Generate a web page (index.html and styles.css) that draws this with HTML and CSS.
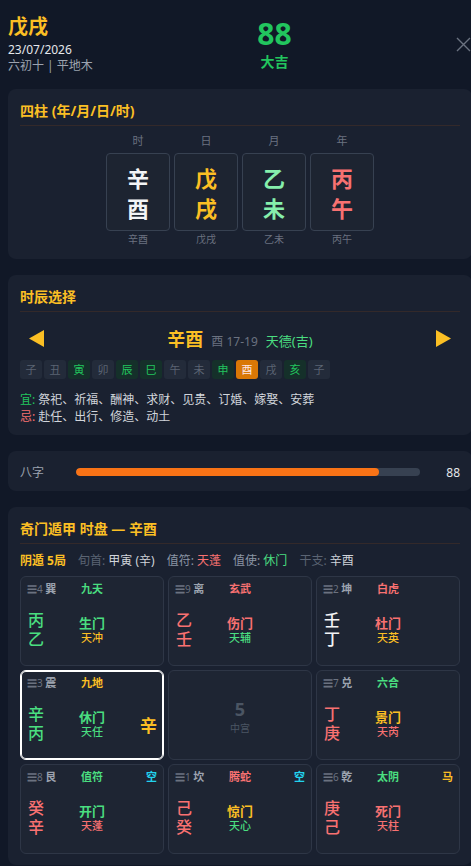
FILE: index.html
```html
<!DOCTYPE html>
<html lang="zh">
<head>
    <meta charset="UTF-8">
    <title>戊戌 23/07/2026</title>
    <link rel="stylesheet" href="styles.css">
</head>
<body>
<div class="page">
    <!-- Day header -->
    <header class="top">
        <div class="day">
            <div class="day-gz">戊戌</div>
            <div class="day-date">23/07/2026</div>
            <div class="day-lunar">六初十 | 平地木</div>
        </div>
        <div class="score">
            <div class="score-num">88</div>
            <div class="score-label">大吉</div>
        </div>
        <button class="close" aria-label="close">
            <svg width="15" height="15" viewBox="0 0 15 15"><path d="M1 1L14 14M14 1L1 14" stroke="#6b7280" stroke-width="1.4" fill="none"/></svg>
        </button>
    </header>

    <!-- Four pillars -->
    <section class="card card-pillars">
        <h2 class="card-title">四柱 (年/月/日/时)</h2>
        <div class="pillars">
            <div class="pillar">
                <div class="pillar-label">时</div>
                <div class="pillar-box c-white"><span>辛</span><span>酉</span></div>
                <div class="pillar-sub">辛酉</div>
            </div>
            <div class="pillar">
                <div class="pillar-label">日</div>
                <div class="pillar-box c-amber"><span>戊</span><span>戌</span></div>
                <div class="pillar-sub">戊戌</div>
            </div>
            <div class="pillar">
                <div class="pillar-label">月</div>
                <div class="pillar-box c-mint"><span>乙</span><span>未</span></div>
                <div class="pillar-sub">乙未</div>
            </div>
            <div class="pillar">
                <div class="pillar-label">年</div>
                <div class="pillar-box c-red"><span>丙</span><span>午</span></div>
                <div class="pillar-sub">丙午</div>
            </div>
        </div>
    </section>

    <!-- Hour selection -->
    <section class="card card-hours">
        <h2 class="card-title">时辰选择</h2>
        <div class="nav">
            <button class="nav-btn" aria-label="prev">
                <svg width="15" height="17" viewBox="0 0 15 17"><path d="M15 0L0 8.5L15 17Z" fill="#fbbf24"/></svg>
            </button>
            <div class="nav-mid">
                <span class="nav-gz">辛酉</span>
                <span class="nav-time">酉 17-19</span>
                <span class="nav-god">天德(吉)</span>
            </div>
            <button class="nav-btn" aria-label="next">
                <svg width="15" height="17" viewBox="0 0 15 17"><path d="M0 0L15 8.5L0 17Z" fill="#fbbf24"/></svg>
            </button>
        </div>
        <div class="hours">
            <span class="hour">子</span>
            <span class="hour">丑</span>
            <span class="hour good">寅</span>
            <span class="hour">卯</span>
            <span class="hour good">辰</span>
            <span class="hour good">巳</span>
            <span class="hour">午</span>
            <span class="hour">未</span>
            <span class="hour good">申</span>
            <span class="hour active">酉</span>
            <span class="hour">戌</span>
            <span class="hour good">亥</span>
            <span class="hour">子</span>
        </div>
        <p class="advice"><span class="yi">宜:</span> 祭祀、祈福、酬神、求财、见贵、订婚、嫁娶、安葬</p>
        <p class="advice"><span class="ji">忌:</span> 赴任、出行、修造、动土</p>
    </section>

    <!-- Score bar -->
    <section class="card card-bar">
        <div class="bar-row">
            <span class="bar-label">八字</span>
            <div class="bar"><div class="bar-fill" style="width: 88%"></div></div>
            <span class="bar-num">88</span>
        </div>
    </section>

    <!-- Qimen chart -->
    <section class="card card-qimen">
        <h2 class="card-title">奇门遁甲 时盘 — 辛酉</h2>
        <div class="info">
            <span class="ju">阴遁 5局</span>
            <span><span class="lbl-dim">旬首:</span> <span class="val">甲寅 (辛)</span></span>
            <span><span class="lbl">值符:</span> <span class="c-red">天蓬</span></span>
            <span><span class="lbl">值使:</span> <span class="c-green">休门</span></span>
            <span><span class="lbl-dim">干支:</span> <span class="val">辛酉</span></span>
        </div>
        <div class="palaces">
            <div class="cell">
                <div class="cell-top"><span class="gua">☰4 <b>巽</b></span><span class="god c-green">九天</span><span></span></div>
                <div class="cell-body">
                    <div class="stems c-green"><span>丙</span><span>乙</span></div>
                    <div class="door"><span class="door-name c-green">生门</span><span class="star c-amber">天冲</span></div>
                    <span></span>
                </div>
            </div>
            <div class="cell">
                <div class="cell-top"><span class="gua">☰9 <b>离</b></span><span class="god c-red">玄武</span><span></span></div>
                <div class="cell-body">
                    <div class="stems c-red"><span>乙</span><span>壬</span></div>
                    <div class="door"><span class="door-name c-red">伤门</span><span class="star c-green">天辅</span></div>
                    <span></span>
                </div>
            </div>
            <div class="cell">
                <div class="cell-top"><span class="gua">☰2 <b>坤</b></span><span class="god c-red">白虎</span><span></span></div>
                <div class="cell-body">
                    <div class="stems c-white"><span>壬</span><span>丁</span></div>
                    <div class="door"><span class="door-name c-red">杜门</span><span class="star c-amber">天英</span></div>
                    <span></span>
                </div>
            </div>
            <div class="cell selected">
                <div class="cell-top"><span class="gua">☰3 <b>震</b></span><span class="god c-amber">九地</span><span></span></div>
                <div class="cell-body">
                    <div class="stems c-green"><span>辛</span><span>丙</span></div>
                    <div class="door"><span class="door-name c-green">休门</span><span class="star c-green">天任</span></div>
                    <span class="extra c-amber">辛</span>
                </div>
            </div>
            <div class="cell cell-center">
                <span class="center-num">5</span>
                <span class="center-name">中宫</span>
            </div>
            <div class="cell">
                <div class="cell-top"><span class="gua">☰7 <b>兑</b></span><span class="god c-green">六合</span><span></span></div>
                <div class="cell-body">
                    <div class="stems c-red"><span>丁</span><span>庚</span></div>
                    <div class="door"><span class="door-name c-amber">景门</span><span class="star c-red">天芮</span></div>
                    <span></span>
                </div>
            </div>
            <div class="cell">
                <div class="cell-top"><span class="gua">☰8 <b>艮</b></span><span class="god c-green">值符</span><span class="mark c-cyan">空</span></div>
                <div class="cell-body">
                    <div class="stems c-red"><span>癸</span><span>辛</span></div>
                    <div class="door"><span class="door-name c-green">开门</span><span class="star c-red">天蓬</span></div>
                    <span></span>
                </div>
            </div>
            <div class="cell">
                <div class="cell-top"><span class="gua">☰1 <b>坎</b></span><span class="god c-red">腾蛇</span><span class="mark c-cyan">空</span></div>
                <div class="cell-body">
                    <div class="stems c-red"><span>己</span><span>癸</span></div>
                    <div class="door"><span class="door-name c-amber">惊门</span><span class="star c-green">天心</span></div>
                    <span></span>
                </div>
            </div>
            <div class="cell">
                <div class="cell-top"><span class="gua">☰6 <b>乾</b></span><span class="god c-green">太阴</span><span class="mark c-amber">马</span></div>
                <div class="cell-body">
                    <div class="stems c-red"><span>庚</span><span>己</span></div>
                    <div class="door"><span class="door-name c-red">死门</span><span class="star c-red">天柱</span></div>
                    <span></span>
                </div>
            </div>
        </div>
    </section>
</div>
</body>
</html>
```

FILE: styles.css
```css
/* Base */
body {
    margin: 0;
    background-color: #111827;
    color: #d1d5db;
    font-family: "Noto Sans", "Noto Sans CJK SC", sans-serif;
    overflow-x: hidden;
}

.page {
    padding: 0 0 0 8px;
}

button {
    background: none;
    border: 0;
    padding: 0;
    cursor: pointer;
}

/* Colours */
.c-white { color: #f3f4f6; }
.c-amber { color: #fbbf24; }
.c-mint { color: #86efac; }
.c-green { color: #4ade80; }
.c-red { color: #f87171; }
.c-cyan { color: #22d3ee; }

/* Header */
.top {
    display: flex;
    justify-content: space-between;
    align-items: flex-start;
    padding: 13px 0 15px 0;
}

.day-gz {
    font-size: 20px;
    font-weight: 700;
    line-height: 28px;
    color: #fbbf24;
}

.day-date {
    font-size: 12px;
    line-height: 16px;
    margin-top: 1px;
    color: #e5e7eb;
}

.day-lunar {
    font-size: 12px;
    line-height: 16px;
    color: #9ca3af;
}

.score {
    text-align: center;
    margin-top: 1px;
    color: #22c55e;
}

.score-num {
    font-size: 30px;
    font-weight: 700;
    line-height: 40px;
}

.score-label {
    font-size: 14px;
    font-weight: 700;
    line-height: 16px;
}

.close {
    margin-top: 24px;
    width: 15px;
    height: 15px;
    display: block;
}

/* Cards */
.card {
    background-color: #1a2130;
    border-radius: 8px;
    margin: 0 -1px 16px 0;
    padding: 12px;
}

.card-title {
    margin: 0;
    font-size: 14px;
    font-weight: 700;
    line-height: 20px;
    color: #fbbf24;
    padding-bottom: 4px;
    border-bottom: 1px solid #33292a;
}

/* Four pillars */
.card-pillars {
    padding-bottom: 13px;
}

.pillars {
    display: flex;
    justify-content: center;
    gap: 4px;
    margin-top: 8px;
}

.pillar {
    width: 64px;
    text-align: center;
}

.pillar-label {
    font-size: 11px;
    line-height: 14px;
    color: #6b7280;
}

.pillar-box {
    margin-top: 5px;
    height: 78px;
    box-sizing: border-box;
    border: 1px solid #374151;
    border-radius: 4px;
    background-color: #1d2431;
    padding-top: 9px;
    display: flex;
    flex-direction: column;
    align-items: center;
    font-size: 22px;
    font-weight: 700;
    line-height: 30px;
}

.pillar-sub {
    margin-top: 1px;
    font-size: 10px;
    line-height: 14px;
    color: #6b7280;
}

/* Hour selection */
.card-hours {
    padding-bottom: 10px;
}

.nav {
    display: flex;
    align-items: center;
    justify-content: space-between;
    height: 28px;
    margin-top: 12px;
}

.nav-btn {
    padding: 0 9px;
    height: 17px;
}

.nav-btn svg {
    display: block;
}

.nav-mid {
    display: flex;
    align-items: baseline;
    gap: 8px;
}

.nav-gz {
    font-size: 18px;
    font-weight: 700;
    color: #fbbf24;
}

.nav-time {
    font-size: 12px;
    color: #6b7280;
}

.nav-god {
    font-size: 13px;
    color: #4ade80;
}

.hours {
    display: flex;
    gap: 2px;
    margin-top: 8px;
}

.hour {
    width: 22px;
    height: 19px;
    line-height: 19px;
    text-align: center;
    font-size: 11px;
    border-radius: 3px;
    background-color: #232b3a;
    color: #5b6473;
}

.hour.good {
    background-color: #15302a;
    color: #22c55e;
}

.hour.active {
    background-color: #d97706;
    color: #fde7e7;
}

.advice {
    margin: 0;
    font-size: 12px;
    line-height: 17px;
    color: #d1d5db;
}

.advice:first-of-type {
    margin-top: 12px;
}

.yi { color: #22c55e; }
.ji { color: #f87171; }

/* Score bar */
.card-bar {
    padding: 13px 12px 11px;
}

.bar-row {
    display: flex;
    align-items: center;
    height: 16px;
}

.bar-label {
    width: 56px;
    font-size: 12px;
    color: #9ca3af;
}

.bar {
    flex: 1;
    height: 8px;
    border-radius: 4px;
    background-color: #374151;
    overflow: hidden;
}

.bar-fill {
    height: 100%;
    border-radius: 4px;
    background-color: #f97316;
}

.bar-num {
    width: 40px;
    text-align: right;
    font-size: 12px;
    color: #e5e7eb;
}

/* Qimen */
.card-qimen {
    padding-bottom: 11px;
}

.info {
    display: flex;
    gap: 12px;
    margin-top: 8px;
    font-size: 12px;
    line-height: 18px;
}

.ju {
    font-weight: 700;
    color: #fbbf24;
}

.lbl { color: #8b95a5; }
.lbl-dim { color: #5b6473; }
.val { color: #d1d5db; }

.palaces {
    display: grid;
    grid-template-columns: repeat(3, 1fr);
    gap: 4px;
    margin-top: 6px;
}

.cell {
    height: 90px;
    box-sizing: border-box;
    background-color: #1e2533;
    border: 1px solid #2e3646;
    border-radius: 6px;
    padding: 5px 6px;
}

.cell.selected {
    border-color: #ffffff;
    box-shadow: inset 0 0 0 1px #ffffff;
}

.cell-top,
.cell-body {
    display: grid;
    grid-template-columns: 1fr auto 1fr;
    align-items: center;
}

.cell-top {
    height: 14px;
    line-height: 14px;
    font-size: 11px;
}

.gua {
    font-size: 10px;
    color: #6b7280;
}

.gua b {
    font-size: 11px;
    color: #9ca3af;
}

.god {
    font-weight: 700;
}

.mark {
    justify-self: end;
    font-weight: 700;
}

.cell-body {
    margin-top: 15px;
}

.stems {
    display: flex;
    flex-direction: column;
    font-size: 16px;
    font-weight: 500;
    line-height: 19px;
    padding-left: 1px;
}

.door {
    display: flex;
    flex-direction: column;
    align-items: center;
}

.door-name {
    font-size: 13px;
    font-weight: 700;
    line-height: 15px;
}

.star {
    font-size: 11px;
    font-weight: 500;
    line-height: 13px;
}

.extra {
    justify-self: end;
    font-size: 17px;
    font-weight: 700;
}

.cell-center {
    display: flex;
    flex-direction: column;
    align-items: center;
    justify-content: center;
    padding-top: 8px;
    color: #4b5563;
}

.center-num {
    font-size: 18px;
    font-weight: 700;
    line-height: 22px;
}

.center-name {
    font-size: 10px;
    line-height: 16px;
}
```
